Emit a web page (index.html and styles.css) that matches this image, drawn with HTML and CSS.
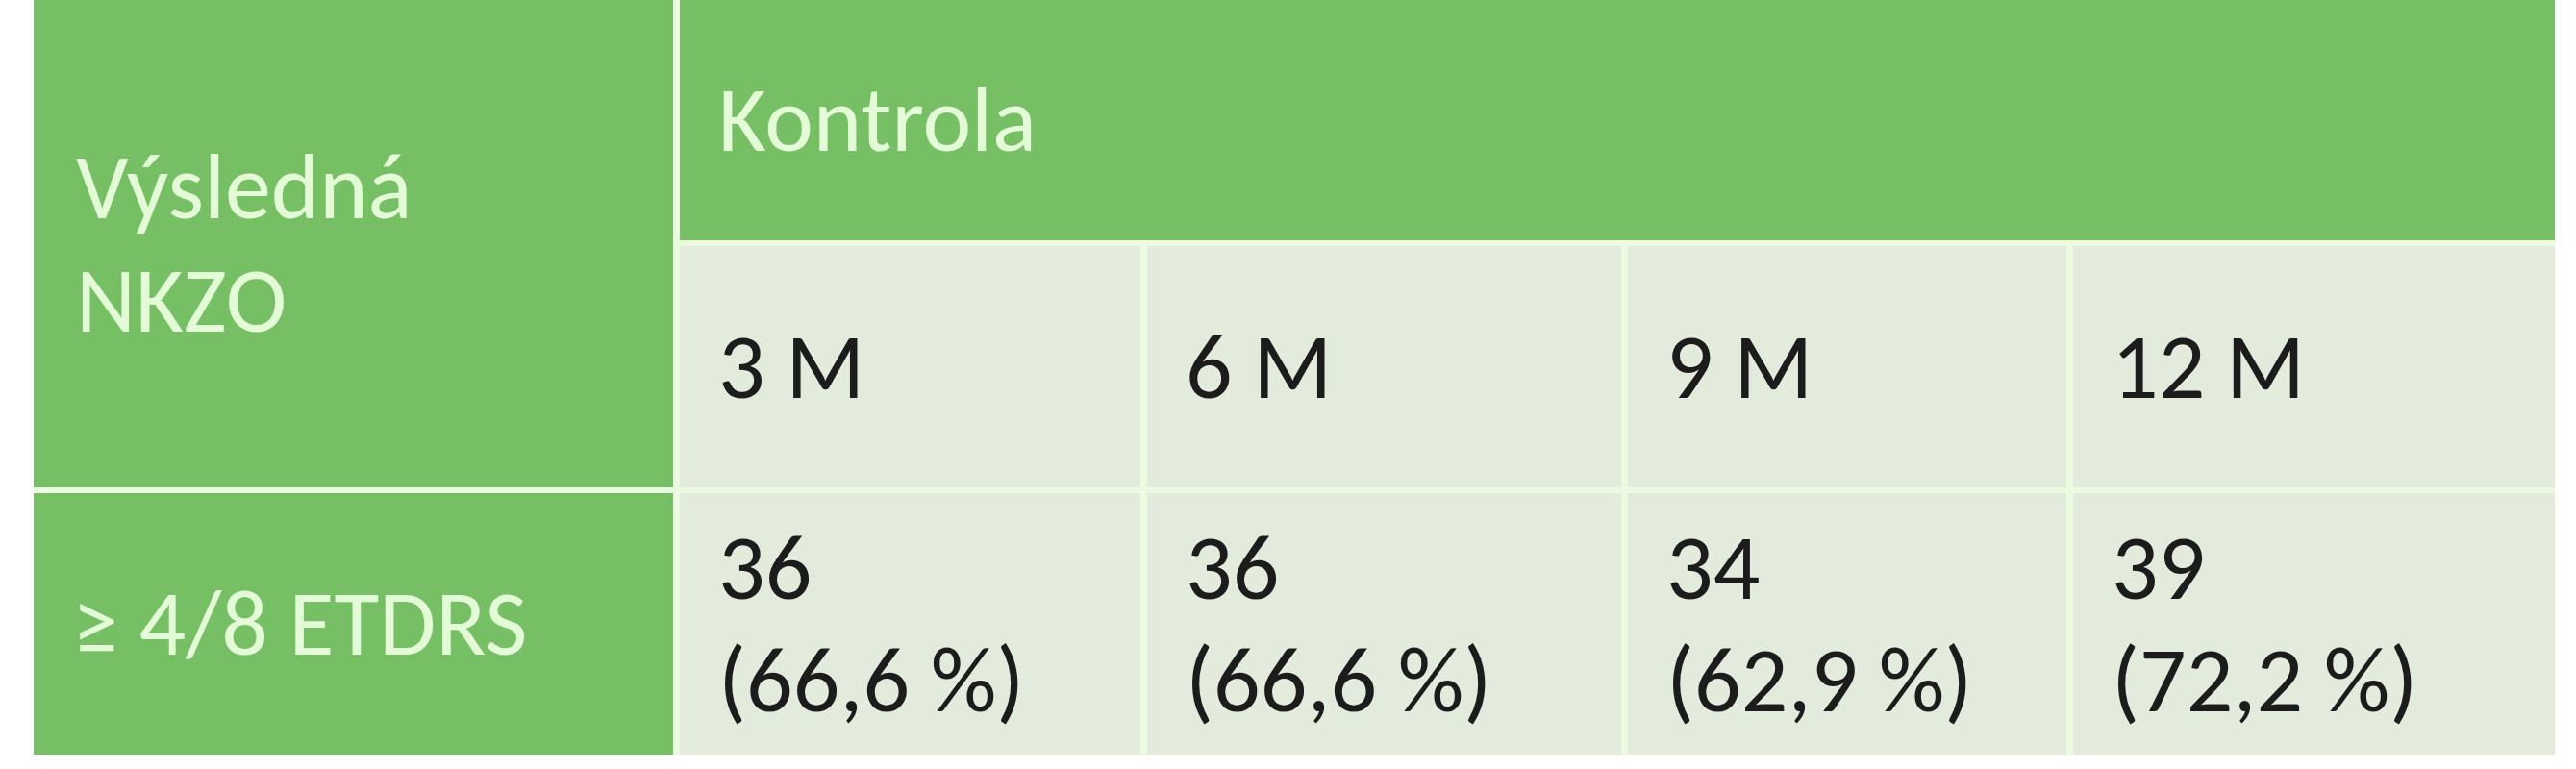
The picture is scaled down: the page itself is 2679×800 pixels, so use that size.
FILE: index.html
```html
<!DOCTYPE html>
<html lang="cs">
<head>
<meta charset="utf-8">
<title>Výsledná NKZO</title>
<link rel="stylesheet" href="styles.css">
</head>
<body>
<div class="table">
  <div class="cell head corner"><span>Výsledná<br>NKZO</span></div>
  <div class="cell head span4"><span>Kontrola</span></div>
  <div class="cell body"><span>3 M</span></div>
  <div class="cell body"><span>6 M</span></div>
  <div class="cell body"><span>9 M</span></div>
  <div class="cell body"><span>12 M</span></div>
  <div class="cell head"><span>≥ 4/8 ETDRS</span></div>
  <div class="cell body"><span>36<br>(66,6 %)</span></div>
  <div class="cell body"><span>36<br>(66,6 %)</span></div>
  <div class="cell body"><span>34<br>(62,9 %)</span></div>
  <div class="cell body"><span>39<br>(72,2 %)</span></div>
</div>
</body>
</html>
```
FILE: styles.css
```css
html, body {
  margin: 0;
  padding: 0;
  background: #ffffff;
}
body {
  padding-left: 35px;
  font-family: "Carlito", "Liberation Sans Narrow", "DejaVu Sans Condensed", "Open Sans", sans-serif;
}
.table {
  display: grid;
  width: 2622px;
  grid-template-columns: 665px 479px 493px 456px 501px;
  grid-template-rows: 250px 251px 272px;
  column-gap: 7px;
  row-gap: 6px;
  background: #eafbe0;
  padding-bottom: 0;
}
.cell {
  display: flex;
  align-items: center;
  padding-left: 40px;
  font-size: 96px;
  line-height: 1.22;
}
.head {
  background: #77bf65;
  color: #e3fbd6;
}
.body {
  background: #e3ecdc;
  color: #1c1c1c;
}
.corner {
  grid-row: 1 / span 2;
  padding-left: 44px;
}
.span4 {
  grid-column: 2 / span 4;
}
```
